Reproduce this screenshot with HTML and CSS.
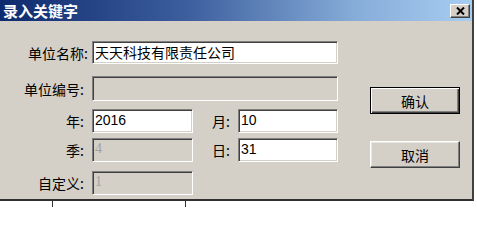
FILE: index.html
```html
<!DOCTYPE html>
<html lang="zh-CN">
<head>
<meta charset="utf-8">
<title>录入关键字</title>
<link rel="stylesheet" href="styles.css">
</head>
<body>
<div class="screen">
  <div class="window">
    <div class="titlebar">
      <span class="title">录入关键字</span>
      <button class="close" type="button" aria-label="关闭">
        <svg width="9" height="8" viewBox="0 0 9 8"><path d="M1 0.5 L8 7.5 M8 0.5 L1 7.5" stroke="#000" stroke-width="2" fill="none"/></svg>
      </button>
    </div>
    <div class="body">
      <div class="form">
        <div class="row r1">
          <label class="lbl lbl-first">单位名称:</label>
          <div class="field wide">天天科技有限责任公司</div>
        </div>
        <div class="row r2">
          <label class="lbl">单位编号:</label>
          <div class="field wide disabled"></div>
        </div>
        <div class="row r3">
          <label class="lbl">年:</label>
          <div class="field num">2016</div>
          <label class="lbl2">月:</label>
          <div class="field num right">10</div>
        </div>
        <div class="row r4">
          <label class="lbl">季:</label>
          <div class="field num disabled">4</div>
          <label class="lbl2">日:</label>
          <div class="field num right">31</div>
        </div>
        <div class="row r5">
          <label class="lbl">自定义:</label>
          <div class="field num disabled">1</div>
        </div>
      </div>
      <div class="buttons">
        <button class="btn default" type="button">确认</button>
        <button class="btn" type="button">取消</button>
      </div>
    </div>
  </div>
  <div class="below"><span class="tick t1"></span><span class="tick t2"></span></div>
</div>
</body>
</html>
```
FILE: styles.css
```css
html, body {
  margin: 0;
  padding: 0;
  background: #ffffff;
}
.screen {
  width: 477px;
  height: 207px;
  overflow: hidden;
  font-family: "Noto Sans CJK SC", "Liberation Sans", sans-serif;
  font-size: 14px;
  color: #000;
}
.window {
  width: 474px;
  height: 201px;
  box-sizing: border-box;
  background: #d4d0c8;
  border-right: 2px solid #404040;
  border-bottom: 2px solid #303030;
  display: flex;
  flex-direction: column;
}
.titlebar {
  height: 21px;
  flex: none;
  background: linear-gradient(to right, #0e2a6e 0%, #3d5f9e 40%, #86acd8 75%, #a8cdf2 100%);
  display: flex;
  align-items: center;
  justify-content: space-between;
}
.title {
  color: #fff;
  font-weight: bold;
  font-size: 15px;
  line-height: 21px;
  padding-left: 3px;
}
.close {
  width: 20px;
  height: 14px;
  margin: 0 2px 0 0;
  padding: 0;
  box-sizing: border-box;
  background: #d4d0c8;
  border: 1px solid;
  border-color: #fff #404040 #404040 #fff;
  box-shadow: inset -1px -1px #808080;
  display: flex;
  align-items: center;
  justify-content: center;
}
.close svg { display: block; }
.body {
  flex: 1;
  display: flex;
}
.form {
  display: flex;
  flex-direction: column;
  padding-top: 20px;
}
.row {
  display: flex;
  align-items: center;
}
.r1 { height: 23px; }
.r2 { height: 25px; margin-top: 12px; }
.r3 { height: 24px; margin-top: 8px; }
.r4 { height: 24px; margin-top: 5px; }
.r5 { height: 24px; margin-top: 9px; }
.lbl {
  width: 92px;
  box-sizing: border-box;
  padding-right: 8px;
  text-align: right;
  white-space: nowrap;
}
.lbl-first { padding-right: 4px; }
.lbl2 {
  width: 45px;
  box-sizing: border-box;
  padding-right: 8px;
  text-align: right;
  white-space: nowrap;
}
.field {
  height: 100%;
  box-sizing: border-box;
  background: #fff;
  border: 1px solid;
  border-color: #808080 #ffffff #ffffff #808080;
  box-shadow: inset 1px 1px #404040, inset -1px -1px #d4d0c8;
  padding: 0 0 2px 2px;
  display: flex;
  align-items: center;
  white-space: nowrap;
  overflow: hidden;
}
.wide { width: 246px; }
.num {
  width: 101px;
  font-family: "Liberation Sans", sans-serif;
  font-size: 14px;
}
.num.right { width: 100px; }
.disabled {
  background: #d4d0c8;
  color: #a0a0a0;
  font-family: "Liberation Serif", serif;
}
.buttons {
  margin-left: 32px;
  padding-top: 66px;
  display: flex;
  flex-direction: column;
  gap: 27px;
}
.btn {
  width: 90px;
  height: 27px;
  box-sizing: border-box;
  padding: 0;
  font-family: "Noto Sans CJK SC", sans-serif;
  font-size: 14px;
  color: #000;
  background: #d4d0c8;
  border: 1px solid;
  border-color: #fff #404040 #404040 #fff;
  box-shadow: inset -1px -1px #808080, inset 1px 1px #e8e6e2;
}
.btn.default {
  border: 1px solid #000;
  box-shadow: inset 1px 1px #fff, inset -1px -1px #404040, inset -2px -2px #808080;
}
.below {
  height: 6px;
  position: relative;
}
.tick {
  position: absolute;
  top: 0;
  width: 1px;
  height: 6px;
  background: #303030;
}
.t1 { left: 52px; }
.t2 { left: 185px; }
```
